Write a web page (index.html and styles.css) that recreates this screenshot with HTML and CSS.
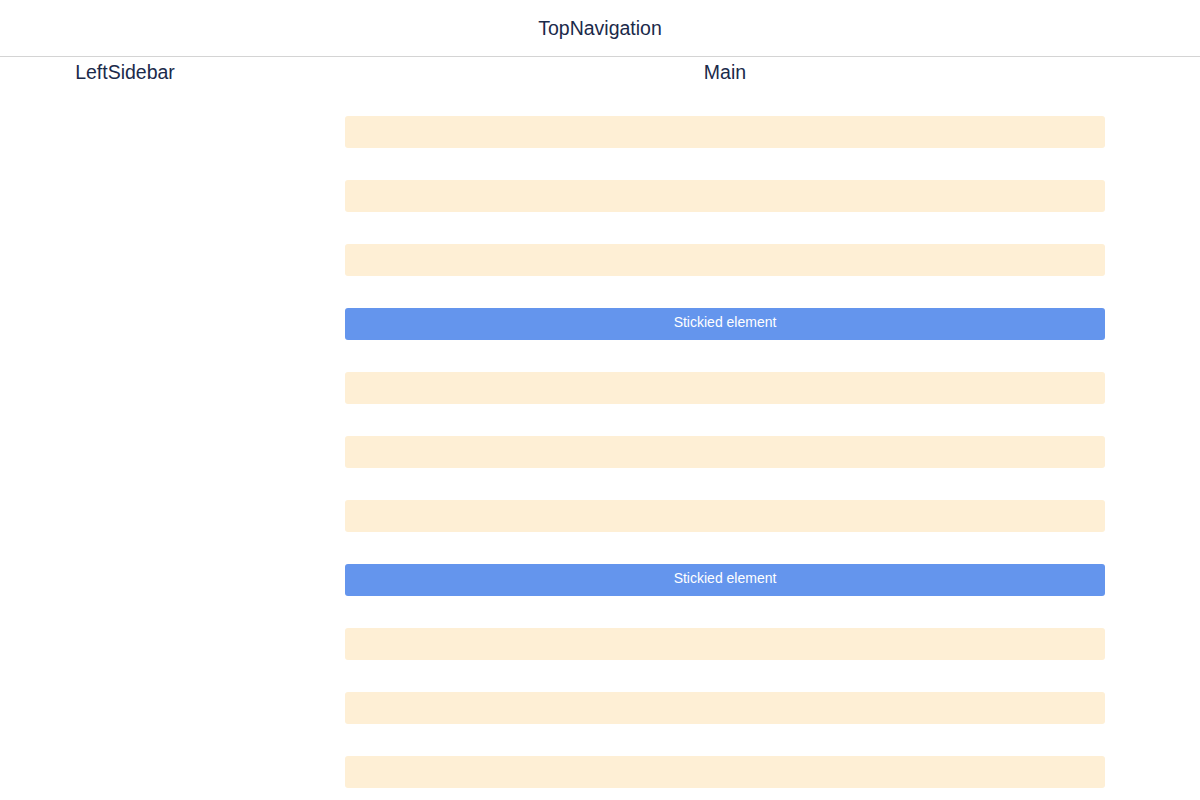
FILE: index.html
```html
<!DOCTYPE html>
<html>
<head>
<meta charset="utf-8">
<link rel="stylesheet" href="styles.css">
</head>
<body>
<header class="top-nav">TopNavigation</header>
<div class="layout">
  <aside class="sidebar">
    <div class="label">LeftSidebar</div>
  </aside>
  <main class="main">
    <div class="label">Main</div>
    <div class="bars">
      <div class="bar"></div>
      <div class="bar"></div>
      <div class="bar"></div>
      <div class="bar sticky">Stickied element</div>
      <div class="bar"></div>
      <div class="bar"></div>
      <div class="bar"></div>
      <div class="bar sticky">Stickied element</div>
      <div class="bar"></div>
      <div class="bar"></div>
      <div class="bar"></div>
      <div class="bar"></div>
    </div>
  </main>
</div>
</body>
</html>
```
FILE: styles.css
```css
html, body {
  margin: 0;
  padding: 0;
  background: #ffffff;
  font-family: "Liberation Sans", Arial, sans-serif;
  color: #1b2a4a;
}
body {
  height: 800px;
  overflow: hidden;
}
.top-nav {
  height: 56px;
  line-height: 56px;
  text-align: center;
  font-size: 19.5px;
  border-bottom: 1px solid #d4d4d4;
}
.layout {
  display: flex;
}
.sidebar {
  width: 250px;
  flex: none;
}
.main {
  flex: 1;
}
.label {
  text-align: center;
  font-size: 19.5px;
  line-height: 30px;
}
.bars {
  display: flex;
  flex-direction: column;
  align-items: center;
  gap: 32px;
  padding-top: 29px;
}
.bar {
  width: 760px;
  height: 32px;
  background: #feefd5;
  border-radius: 3px;
  flex: none;
}
.bar.sticky {
  background: #6495ed;
  color: #ffffff;
  font-size: 14px;
  line-height: 29px;
  text-align: center;
}
```
